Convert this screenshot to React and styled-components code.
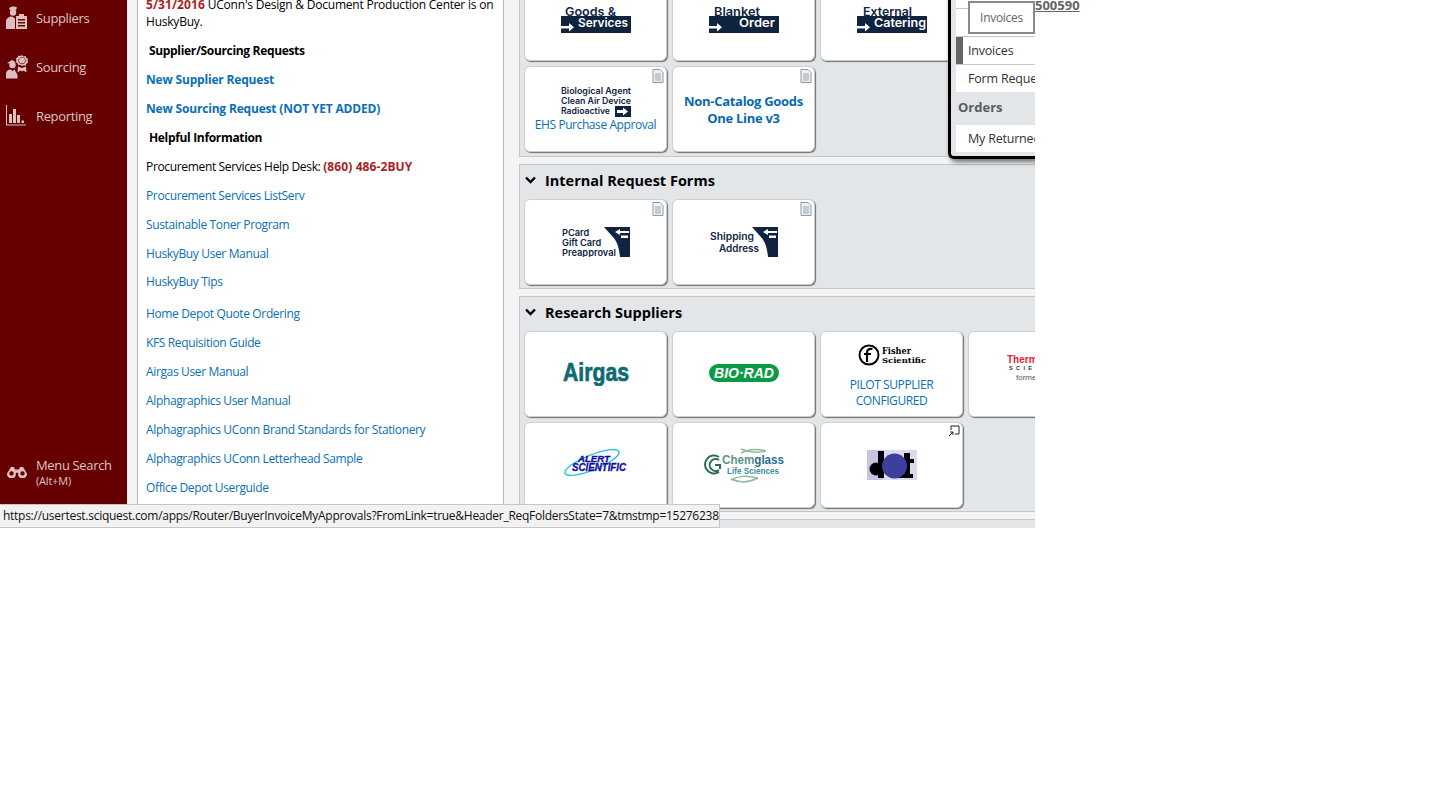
import React from 'react';
import styled, { createGlobalStyle } from 'styled-components';

const FONT = '"Open Sans", "Noto Sans", "Liberation Sans", sans-serif';
const NAVY = '#10243f';
const LINK = '#0a6fb5';

const GlobalStyle = createGlobalStyle`
  html, body { margin: 0; padding: 0; background: #fff; }
  body { font-family: ${FONT}; font-size: 12px; color: #000; }
`;

const Page = styled.div`
  position: relative;
  width: 1446px;
  height: 792px;
  overflow: hidden;
  background: #fff;
`;

const Frame = styled.div`
  position: relative;
  display: flex;
  width: 1035px;
  height: 528px;
  overflow: hidden;
  background: #f4f4f4;
`;

/* left nav */
const Sidebar = styled.nav`
  flex: 0 0 127px;
  display: flex;
  flex-direction: column;
  justify-content: space-between;
  padding: 0 0 31px;
  background: #660000;
  color: #dcc4c4;
`;

const NavList = styled.div`
  display: flex;
  flex-direction: column;
  margin-top: -7px;
`;

const NavItem = styled.div`
  display: flex;
  align-items: center;
  height: 49px;
  padding-left: 6px;
  font-size: 13px;
  letter-spacing: -0.35px;
`;

const IconSlot = styled.span`
  flex: 0 0 30px;
  display: flex;
  align-items: center;
`;

const NavIcon = styled.svg`
  flex: none;
  fill: #dcbfbf;
`;

const SearchText = styled.div`
  display: flex;
  flex-direction: column;
  line-height: 16px;
  small { font-size: 11px; letter-spacing: -0.2px; }
`;

const Gutter = styled.div`
  flex: 0 0 10px;
`;

/* announcement column */
const InfoPanel = styled.div`
  flex: 0 0 367px;
  box-sizing: border-box;
  height: 560px;
  margin-top: -4px;
  padding: 0 8px;
  background: #fff;
  border-left: 1px solid #b9b9b9;
  border-right: 1px solid #b9b9b9;
`;

const Para = styled.p`
  margin: 0 0 ${p => p.$after || 12}px;
  line-height: 17px;
  font-size: 12px;
  letter-spacing: ${p => p.$track || -0.34}px;
`;

const Heading = styled(Para)`
  padding-left: 3px;
  font-weight: 700;
  letter-spacing: -0.33px;
`;

const Red = styled.span`
  color: #a81e22;
  font-weight: 700;
  letter-spacing: 0.1px;
`;

const LinkText = styled.a`
  color: ${LINK};
  font-weight: ${p => (p.$bold ? 700 : 400)};
  letter-spacing: ${p => (p.$bold ? -0.18 : -0.36)}px;
`;

/* forms column */
const Main = styled.main`
  flex: 1 1 0;
  min-width: 0;
  padding-left: 15px;
  display: flex;
  flex-direction: column;
  gap: 7px;
`;

const Section = styled.section`
  box-sizing: border-box;
  width: 640px;
  flex: none;
  padding: ${p => p.$top || 0}px 4px ${p => p.$bottom || 3}px;
  background: #e3e6e9;
  border: 1px solid #c4c6c8;
  margin-top: ${p => p.$offset || 0}px;
`;

const SectionTitle = styled.h3`
  display: flex;
  align-items: center;
  gap: 9px;
  box-sizing: border-box;
  height: 34px;
  margin: 0;
  padding: 0 0 4px 1px;
  font-size: 14.5px;
  font-weight: 700;
`;

const CardGrid = styled.div`
  display: grid;
  grid-template-columns: repeat(4, 143px);
  grid-auto-rows: 86px;
  gap: 5px;
`;

const Card = styled.div`
  position: relative;
  box-sizing: border-box;
  display: flex;
  flex-direction: column;
  align-items: center;
  justify-content: center;
  padding-top: ${p => p.$drop || 0}px;
  padding-bottom: ${p => p.$lift || 0}px;
  background: #fff;
  border: 1px solid #cfcfcf;
  border-radius: 6px;
  box-shadow: 1px 1px 1px #6f6f6f;
  overflow: hidden;
  text-align: center;
`;

const CardCaption = styled.span`
  margin-top: ${p => p.$gap || 0}px;
  color: ${LINK};
  font-size: 12px;
  line-height: 16px;
  letter-spacing: -0.42px;
`;

const CardTitle = styled.span`
  color: #0a69ad;
  font-size: 13px;
  font-weight: 700;
  line-height: 17px;
  letter-spacing: -0.3px;
`;

const Corner = styled.svg`
  position: absolute;
  top: 2px;
  right: 2px;
`;

/* popover over the forms */
const Popover = styled.div`
  position: absolute;
  top: -8px;
  left: 948px;
  box-sizing: border-box;
  width: 260px;
  height: 167px;
  padding: 0 0 4px 5px;
  background: #e3e6e9;
  border: 3px solid #000;
  border-right: 0;
  border-radius: 0 0 0 6px;
  box-shadow: 2px 3px 5px rgba(0, 0, 0, 0.55);
`;

const PopRow = styled.div`
  box-sizing: border-box;
  display: flex;
  align-items: center;
  height: ${p => p.$h || 28}px;
  padding-left: ${p => (p.$active ? 5 : 12)}px;
  background: #fff;
  border-top: ${p => (p.$line ? '1px solid #c9c9c9' : 0)};
  font-size: 12.5px;
  letter-spacing: -0.2px;
  color: #333;
  white-space: nowrap;
  &::before {
    content: '';
    display: ${p => (p.$active ? 'block' : 'none')};
    width: 7px;
    height: 100%;
    margin-right: 5px;
    margin-left: -5px;
    background: #666;
  }
`;

const PopHeading = styled.div`
  display: flex;
  align-items: center;
  box-sizing: border-box;
  height: 33px;
  padding: 0 0 3px 2px;
  font-size: 13px;
  font-weight: 700;
  color: #5c5c5c;
`;

const PopButton = styled.div`
  position: absolute;
  top: 6px;
  left: 17px;
  box-sizing: border-box;
  display: flex;
  align-items: center;
  justify-content: center;
  width: 67px;
  height: 33px;
  background: #fff;
  border: 2px solid #8a8a8a;
  color: #666;
  font-size: 12px;
  letter-spacing: -0.3px;
`;

const OrderNo = styled.a`
  position: absolute;
  top: -3px;
  left: 1035px;
  color: #646464;
  font-size: 13px;
  font-weight: 700;
  line-height: 17px;
  text-decoration: underline;
`;

const StatusTip = styled.div`
  position: absolute;
  top: 504px;
  left: 0;
  box-sizing: border-box;
  width: 720px;
  height: 24px;
  padding: 0 3px;
  overflow: hidden;
  background: #f2f2f2;
  border: 1px solid #c6c6c6;
  border-left: 0;
  font-size: 12px;
  line-height: 22px;
  letter-spacing: -0.27px;
  color: #111;
  white-space: nowrap;
`;

/* drawn bits */
const DocIcon = () => (
  <Corner width="12" height="14" viewBox="0 0 12 14">
    <path d="M1 .5h7l3 3v10H1z" fill="#eef0f2" stroke="#8b98a6" />
    <path d="M3 5h6M3 7h6M3 9h6M3 11h6" stroke="#9aa5b0" />
  </Corner>
);

const PopOutIcon = () => (
  <Corner width="12" height="12" viewBox="0 0 12 12">
    <path d="M3 5V1h8v8H7" fill="none" stroke="#222" />
    <path d="M1 11l4-4M2 7h3v3" fill="none" stroke="#222" />
  </Corner>
);

const Chevron = () => (
  <svg width="11" height="8" viewBox="0 0 11 8">
    <path d="M1 1.500l4.500 4.500L10 1.500" fill="none" stroke="#000" strokeWidth="2.400" />
  </svg>
);

const SuppliersIcon = () => (
  <NavIcon width="21" height="24" viewBox="0 0 21 24">
    <path d="M3 2.500C5 0 9 0 11 1.500l-1 2.500H4z" />
    <circle cx="7" cy="6.500" r="3.200" />
    <path d="M0 23v-7c0-4 3-5.500 6-5.500l3 2V23z" />
    <path fillRule="evenodd" d="M10 10h11v13H10zM12 13v1.500h7V13zM12 16v1.500h7V16zM12 19v1.500h7V19z" />
    <rect x="13" y="8" width="5" height="3" />
  </NavIcon>
);

const SourcingIcon = () => (
  <NavIcon width="22" height="24" viewBox="0 0 22 24">
    <path fillRule="evenodd" d="M16 0l1.600 1.400 2-.4.800 1.900 1.600.9-.4 2 .4 2-1.600 1-.8 1.900-2-.4L16 11.200l-1.600-1.400-2 .4-.8-1.900-1.600-1 .4-2-.4-2 1.600-.9.800-1.900 2 .4zM16 2a3.600 3.600 0 1 0 .01 0z" />
    <circle cx="16" cy="5.600" r="3" />
    <path d="M12 11.500l-.5 6 3-2 1.500 1 1.500-1 3 2-.5-6-4 1.500z" />
    <circle cx="6.500" cy="10" r="3.200" />
    <path d="M1 8l5-3 3.500 2-1 1.500H3zM0 23.500V19c0-3 2-4.500 4.500-4.500l2 1.500 2-1.500 3 5.500v3.500z" />
  </NavIcon>
);

const ReportingIcon = () => (
  <NavIcon width="20" height="21" viewBox="0 0 20 21">
    <path d="M0 0h1v19.500h19v1H0zM3 9h3v9H3zM7 4h3v14H7zM11 10h3v8h-3zM15.500 15.500H18V18h-2.500z" />
  </NavIcon>
);

const BinocularIcon = () => (
  <NavIcon width="20" height="11" viewBox="0 0 20 11" style={{ marginLeft: 1 }}>
    <path fillRule="evenodd" d="M4 0h3l1 2.500h4L13 0h3l4 6.500a4.500 4.500 0 1 1-8.800-.8H8.800A4.500 4.500 0 1 1 0 6.500zM4.500 4.300a2.200 2.200 0 1 0 .01 0zM15.500 4.300a2.200 2.200 0 1 0 .01 0z" />
  </NavIcon>
);

/* navy banner logo: dark word on top, reversed word in the band */
const BannerLogo = ({ top, band }) => (
  <svg width="70" height="28" viewBox="0 0 70 28" fontFamily="Inter, sans-serif" fontWeight="600" fontSize="12">
    <text x={top.x} y="10.500" textLength={top.w} lengthAdjust="spacingAndGlyphs" fill={NAVY}>{top.text}</text>
    <rect x="0" y="11" width="70" height="17" fill={NAVY} />
    <text x={band.x} y="21.500" textLength={band.w} lengthAdjust="spacingAndGlyphs" fill="#fff">{band.text}</text>
    <path d="M0 21h8v-3l5 4.200-5 4.200v-3H0z" fill="#fff" />
  </svg>
);

const EhsLogo = () => (
  <svg width="70" height="31" viewBox="0 0 70 31" fontFamily="Inter, sans-serif" fontWeight="600" fontSize="8.800" fill={NAVY}>
    <text x="0" y="8" textLength="70" lengthAdjust="spacingAndGlyphs">Biological Agent</text>
    <text x="0" y="18" textLength="70" lengthAdjust="spacingAndGlyphs">Clean Air Device</text>
    <text x="0" y="28" textLength="49" lengthAdjust="spacingAndGlyphs">Radioactive</text>
    <rect x="54" y="20" width="16" height="11" fill={NAVY} />
    <path d="M56 24h6v-2.500l5 4-5 4V27h-6z" fill="#fff" />
  </svg>
);

const ReturnMark = ({ x }) => (
  <g transform={`translate(${x} 0)`}>
    <path d="M0 0h26v30H16c-1-10-3-16-8-21z" fill={NAVY} />
    <path d="M11 5l5-3v2h9v2h-9v2z" fill="#fff" />
    <path d="M17 8.500h7V11h-7z" fill="#fff" />
  </g>
);

const PcardLogo = () => (
  <svg width="68" height="30" viewBox="0 0 68 30" fontFamily="Inter, sans-serif" fontWeight="600" fontSize="9.200" fill={NAVY}>
    <ReturnMark x="42" />
    <text x="0" y="9">PCard</text>
    <text x="0" y="19">Gift Card</text>
    <text x="0" y="29" textLength="54" lengthAdjust="spacingAndGlyphs">Preapproval</text>
  </svg>
);

const ShippingLogo = () => (
  <svg width="68" height="30" viewBox="0 0 68 30" fontFamily="Inter, sans-serif" fontWeight="600" fontSize="10" fill={NAVY}>
    <ReturnMark x="42" />
    <text x="0" y="13" textLength="44" lengthAdjust="spacingAndGlyphs">Shipping</text>
    <text x="9" y="25" textLength="40" lengthAdjust="spacingAndGlyphs">Address</text>
  </svg>
);

const AirgasLogo = () => (
  <svg width="68" height="24" viewBox="0 0 68 24">
    <text x="1" y="19" fontFamily="'Liberation Sans', sans-serif" fontWeight="700" fontSize="26" textLength="66" lengthAdjust="spacingAndGlyphs" fill="#0e6a73" stroke="#0e6a73" strokeWidth="0.700">Airgas</text>
  </svg>
);

const BioRadLogo = () => (
  <svg width="70" height="18" viewBox="0 0 70 18">
    <rect width="70" height="18" rx="9" fill="#0a9a45" />
    <text x="35" y="13.800" textAnchor="middle" fontFamily="'Liberation Sans', sans-serif" fontStyle="italic" fontWeight="700" fontSize="14" textLength="60" lengthAdjust="spacingAndGlyphs" fill="#fff">BIO·RAD</text>
  </svg>
);

const FisherLogo = () => (
  <svg width="68" height="22" viewBox="0 0 68 22" fill="#000">
    <circle cx="11" cy="11" r="9.500" fill="none" stroke="#000" strokeWidth="2" />
    <path d="M9 18V8.500c0-3 2-4 5.500-3.500M6 10h7" fill="none" stroke="#000" strokeWidth="2.200" />
    <text x="24" y="9.500" fontFamily="'DejaVu Serif', serif" fontWeight="700" fontSize="8.500" textLength="29" lengthAdjust="spacingAndGlyphs">Fisher</text>
    <text x="24" y="18.500" fontFamily="'DejaVu Serif', serif" fontWeight="700" fontSize="8" textLength="44" lengthAdjust="spacingAndGlyphs">Scientific</text>
  </svg>
);

const ThermoLogo = () => (
  <svg width="66" height="26" viewBox="0 0 66 26" fontFamily="'Liberation Sans', sans-serif">
    <text x="0" y="8" fontWeight="700" fontSize="10" fill="#ee1c2e">ThermoFisher</text>
    <text x="2" y="14.500" fontWeight="700" fontSize="5.500" letterSpacing="3.400" fill="#333">SCIENTIFIC</text>
    <text x="9" y="24.500" fontSize="8" fill="#555">formerly</text>
  </svg>
);

const AlertLogo = () => (
  <svg width="64" height="28" viewBox="0 0 64 28">
    <ellipse cx="28" cy="13.500" rx="29" ry="7.500" transform="rotate(-22 28 13.500)" fill="none" stroke="#27c0e8" strokeWidth="1.400" />
    <g fontFamily="'Liberation Sans', sans-serif" fontStyle="italic" fontWeight="700" fill="#10109a" stroke="#10109a" strokeWidth="0.300">
      <text x="14" y="13" fontSize="8.500" textLength="32" lengthAdjust="spacingAndGlyphs">ALERT</text>
      <text x="8" y="22" fontSize="10" textLength="54" lengthAdjust="spacingAndGlyphs">SCIENTIFIC</text>
    </g>
  </svg>
);

const ChemglassLogo = () => (
  <svg width="80" height="38" viewBox="0 0 80 38" fontFamily="'Liberation Sans', sans-serif" fontWeight="700">
    <path d="M37 3c7 3 14 5 25 2M37 7c7-4 14-5 25-2" fill="none" stroke="#8fb89c" strokeWidth="1.500" />
    <path d="M27 33c7 3 14 5 27-1M27 34c7-4 14-5 27-2" fill="none" stroke="#8fb89c" strokeWidth="1.500" />
    <path d="M15 11a9 9 0 1 0 0 15M15 14a6 6 0 1 0 0 10M11 19h5v4" fill="none" stroke="#2c6b50" strokeWidth="2" />
    <text x="18" y="17.500" fontSize="12" textLength="62" lengthAdjust="spacingAndGlyphs" fill="#5a9688">Chem<tspan fill="#256f8a">glass</tspan></text>
    <text x="23" y="27.500" fontSize="9" textLength="52" lengthAdjust="spacingAndGlyphs" fill="#3a8aa0">Life Sciences</text>
  </svg>
);

const DotLogo = () => (
  <svg width="50" height="30" viewBox="0 0 50 30">
    <rect width="50" height="30" fill="#dcd9ee" />
    <rect width="16" height="30" fill="#c9c3e3" />
    <rect x="11" y="1" width="6" height="27" fill="#000" />
    <circle cx="9" cy="19" r="6.500" fill="#000" />
    <rect x="37" y="3" width="6" height="25" fill="#000" />
    <rect x="32" y="9" width="15" height="4" fill="#000" />
    <rect x="30" y="24" width="16" height="4" fill="#000" />
    <circle cx="27.500" cy="16" r="12.500" fill="#3c3f9c" />
  </svg>
);

const App = () => (
  <Page>
    <GlobalStyle />
    <Frame>
      <Sidebar>
        <NavList>
          <NavItem><IconSlot><SuppliersIcon /></IconSlot>Suppliers</NavItem>
          <NavItem><IconSlot><SourcingIcon /></IconSlot>Sourcing</NavItem>
          <NavItem><IconSlot><ReportingIcon /></IconSlot>Reporting</NavItem>
        </NavList>
        <NavItem>
          <IconSlot><BinocularIcon /></IconSlot>
          <SearchText>Menu Search<small>(Alt+M)</small></SearchText>
        </NavItem>
      </Sidebar>
      <Gutter />
      <InfoPanel>
        <Para $track={-0.22}><Red>5/31/2016</Red> UConn's Design &amp; Document Production Center is on HuskyBuy.</Para>
        <Heading>Supplier/Sourcing Requests</Heading>
        <Para><LinkText $bold>New Supplier Request</LinkText></Para>
        <Para><LinkText $bold>New Sourcing Request (NOT YET ADDED)</LinkText></Para>
        <Heading>Helpful Information</Heading>
        <Para>Procurement Services Help Desk: <Red>(860) 486-2BUY</Red></Para>
        <Para><LinkText>Procurement Services ListServ</LinkText></Para>
        <Para><LinkText>Sustainable Toner Program</LinkText></Para>
        <Para $after={11}><LinkText>HuskyBuy User Manual</LinkText></Para>
        <Para $after={15}><LinkText>HuskyBuy Tips</LinkText></Para>
        <Para><LinkText>Home Depot Quote Ordering</LinkText></Para>
        <Para><LinkText>KFS Requisition Guide</LinkText></Para>
        <Para><LinkText>Airgas User Manual</LinkText></Para>
        <Para><LinkText>Alphagraphics User Manual</LinkText></Para>
        <Para><LinkText>Alphagraphics UConn Brand Standards for Stationery</LinkText></Para>
        <Para><LinkText>Alphagraphics UConn Letterhead Sample</LinkText></Para>
        <Para><LinkText>Office Depot Userguide</LinkText></Para>
      </InfoPanel>
      <Main>
        <Section $offset={-30} $top={4} $bottom={4}>
          <CardGrid>
            <Card $drop={2}><BannerLogo top={{ text: 'Goods &', x: 4, w: 51 }} band={{ text: 'Services', x: 17, w: 50 }} /></Card>
            <Card $drop={2}><BannerLogo top={{ text: 'Blanket', x: 5, w: 46 }} band={{ text: 'Order', x: 30, w: 36 }} /></Card>
            <Card $drop={2}><BannerLogo top={{ text: 'External', x: 6, w: 49 }} band={{ text: 'Catering', x: 17, w: 52 }} /></Card>
            <span />
            <Card $drop={1}><DocIcon /><EhsLogo /><CardCaption>EHS Purchase Approval</CardCaption></Card>
            <Card $drop={2}><DocIcon /><CardTitle>Non-Catalog Goods<br />One Line v3</CardTitle></Card>
          </CardGrid>
        </Section>
        <Section>
          <SectionTitle><Chevron />Internal Request Forms</SectionTitle>
          <CardGrid>
            <Card><DocIcon /><PcardLogo /></Card>
            <Card><DocIcon /><ShippingLogo /></Card>
          </CardGrid>
        </Section>
        <Section>
          <SectionTitle><Chevron />Research Suppliers</SectionTitle>
          <CardGrid>
            <Card><AirgasLogo /></Card>
            <Card $lift={2}><BioRadLogo /></Card>
            <Card $drop={5}><FisherLogo /><CardCaption $gap={11}>PILOT SUPPLIER<br />CONFIGURED</CardCaption></Card>
            <Card $lift={12}><ThermoLogo /></Card>
            <Card $lift={4}><AlertLogo /></Card>
            <Card><ChemglassLogo /></Card>
            <Card><PopOutIcon /><DotLogo /></Card>
          </CardGrid>
        </Section>
        <Section>
          <SectionTitle />
        </Section>
      </Main>
      <Popover>
        <PopRow $h={13} />
        <PopRow $h={28} $line />
        <PopRow $active $line>Invoices</PopRow>
        <PopRow $line>Form Requests</PopRow>
        <PopHeading>Orders</PopHeading>
        <PopRow $h={27}>My Returned Forms</PopRow>
        <PopButton>Invoices</PopButton>
      </Popover>
    </Frame>
    <OrderNo>500590</OrderNo>
    <StatusTip>https://usertest.sciquest.com/apps/Router/BuyerInvoiceMyApprovals?FromLink=true&amp;Header_ReqFoldersState=7&amp;tmstmp=15276238000</StatusTip>
  </Page>
);

export default App;
